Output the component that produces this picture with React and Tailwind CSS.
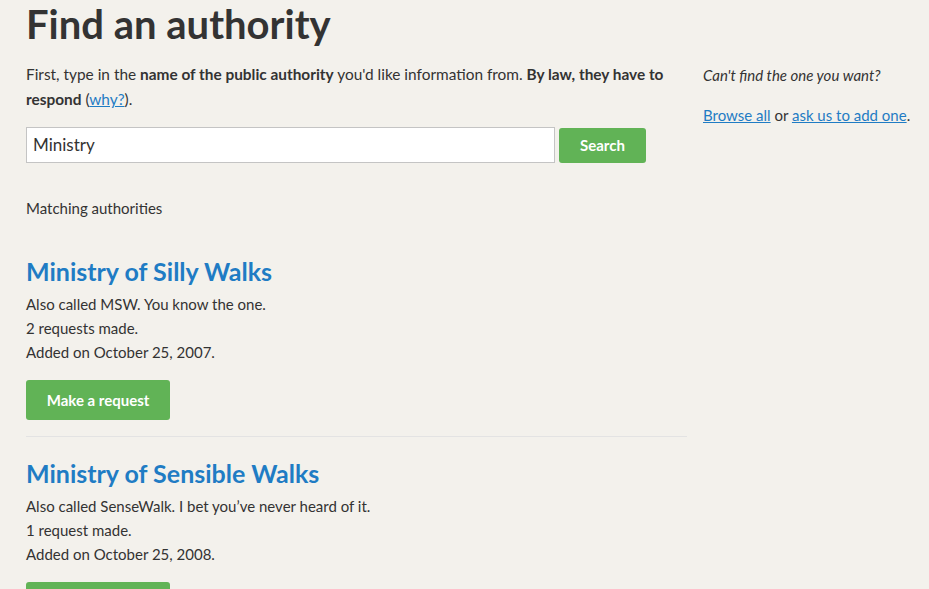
export default function App() {
  return (
    <div className="min-h-[589px] bg-[#f3f1ec] text-[#333333] font-['Lato',sans-serif]">
      <div className="flex gap-4 pl-[26px]">
        <div className="w-[661px] shrink-0">
          <h1 className="text-[40px] font-bold leading-[48px] pt-0 text-[#333333]">Find an authority</h1>
          <p className="mt-[14px] text-[15.4px] leading-[25px]">
            First, type in the <b>name of the public authority</b> you'd like information from. <b>By law, they have to respond</b> (<a href="#" className="text-[#1f7cc4] underline">why?</a>).
          </p>
          <div className="mt-[15px] flex items-start gap-[4px]">
            <div className="w-[529px] h-[36px] bg-white border border-[#c4c4c4] flex items-center px-[6px] text-[17px] text-[#333333]">Ministry</div>
            <button className="mt-[1px] w-[87px] h-[35px] bg-[#61b356] text-white font-bold text-[15px] rounded-[3px]">Search</button>
          </div>
          <p className="mt-[35px] text-[15px] leading-[20px]">Matching authorities</p>
          <div className="mt-[37px] border-b border-[#e3e3e3] pb-[16px]">
            <h2 className="text-[25px] font-bold leading-[32px] text-[#1f7cc4]">Ministry of Silly Walks</h2>
            <div className="mt-[5px] text-[15px] leading-[24px]">
              <p>Also called MSW. You know the one.</p>
              <p>2 requests made.</p>
              <p>Added on October 25, 2007.</p>
            </div>
            <button className="mt-[16px] w-[144px] h-[40px] bg-[#61b356] text-white font-bold text-[15px] rounded-[3px]">Make a request</button>
          </div>
          <div className="mt-[20px]">
            <h2 className="text-[25px] font-bold leading-[32px] text-[#1f7cc4]">Ministry of Sensible Walks</h2>
            <div className="mt-[5px] text-[15px] leading-[24px]">
              <p>Also called SenseWalk. I bet you’ve never heard of it.</p>
              <p>1 request made.</p>
              <p>Added on October 25, 2008.</p>
            </div>
            <button className="mt-[16px] w-[144px] h-[40px] bg-[#61b356] text-white font-bold text-[15px] rounded-[3px]">Make a request</button>
          </div>
        </div>
        <div className="pt-[63px] text-[15px] leading-[24px]">
          <p className="italic">Can't find the one you want?</p>
          <p className="mt-[16px]"><a href="#" className="text-[#1f7cc4] underline">Browse all</a> or <a href="#" className="text-[#1f7cc4] underline">ask us to add one</a>.</p>
        </div>
      </div>
    </div>
  );
}
